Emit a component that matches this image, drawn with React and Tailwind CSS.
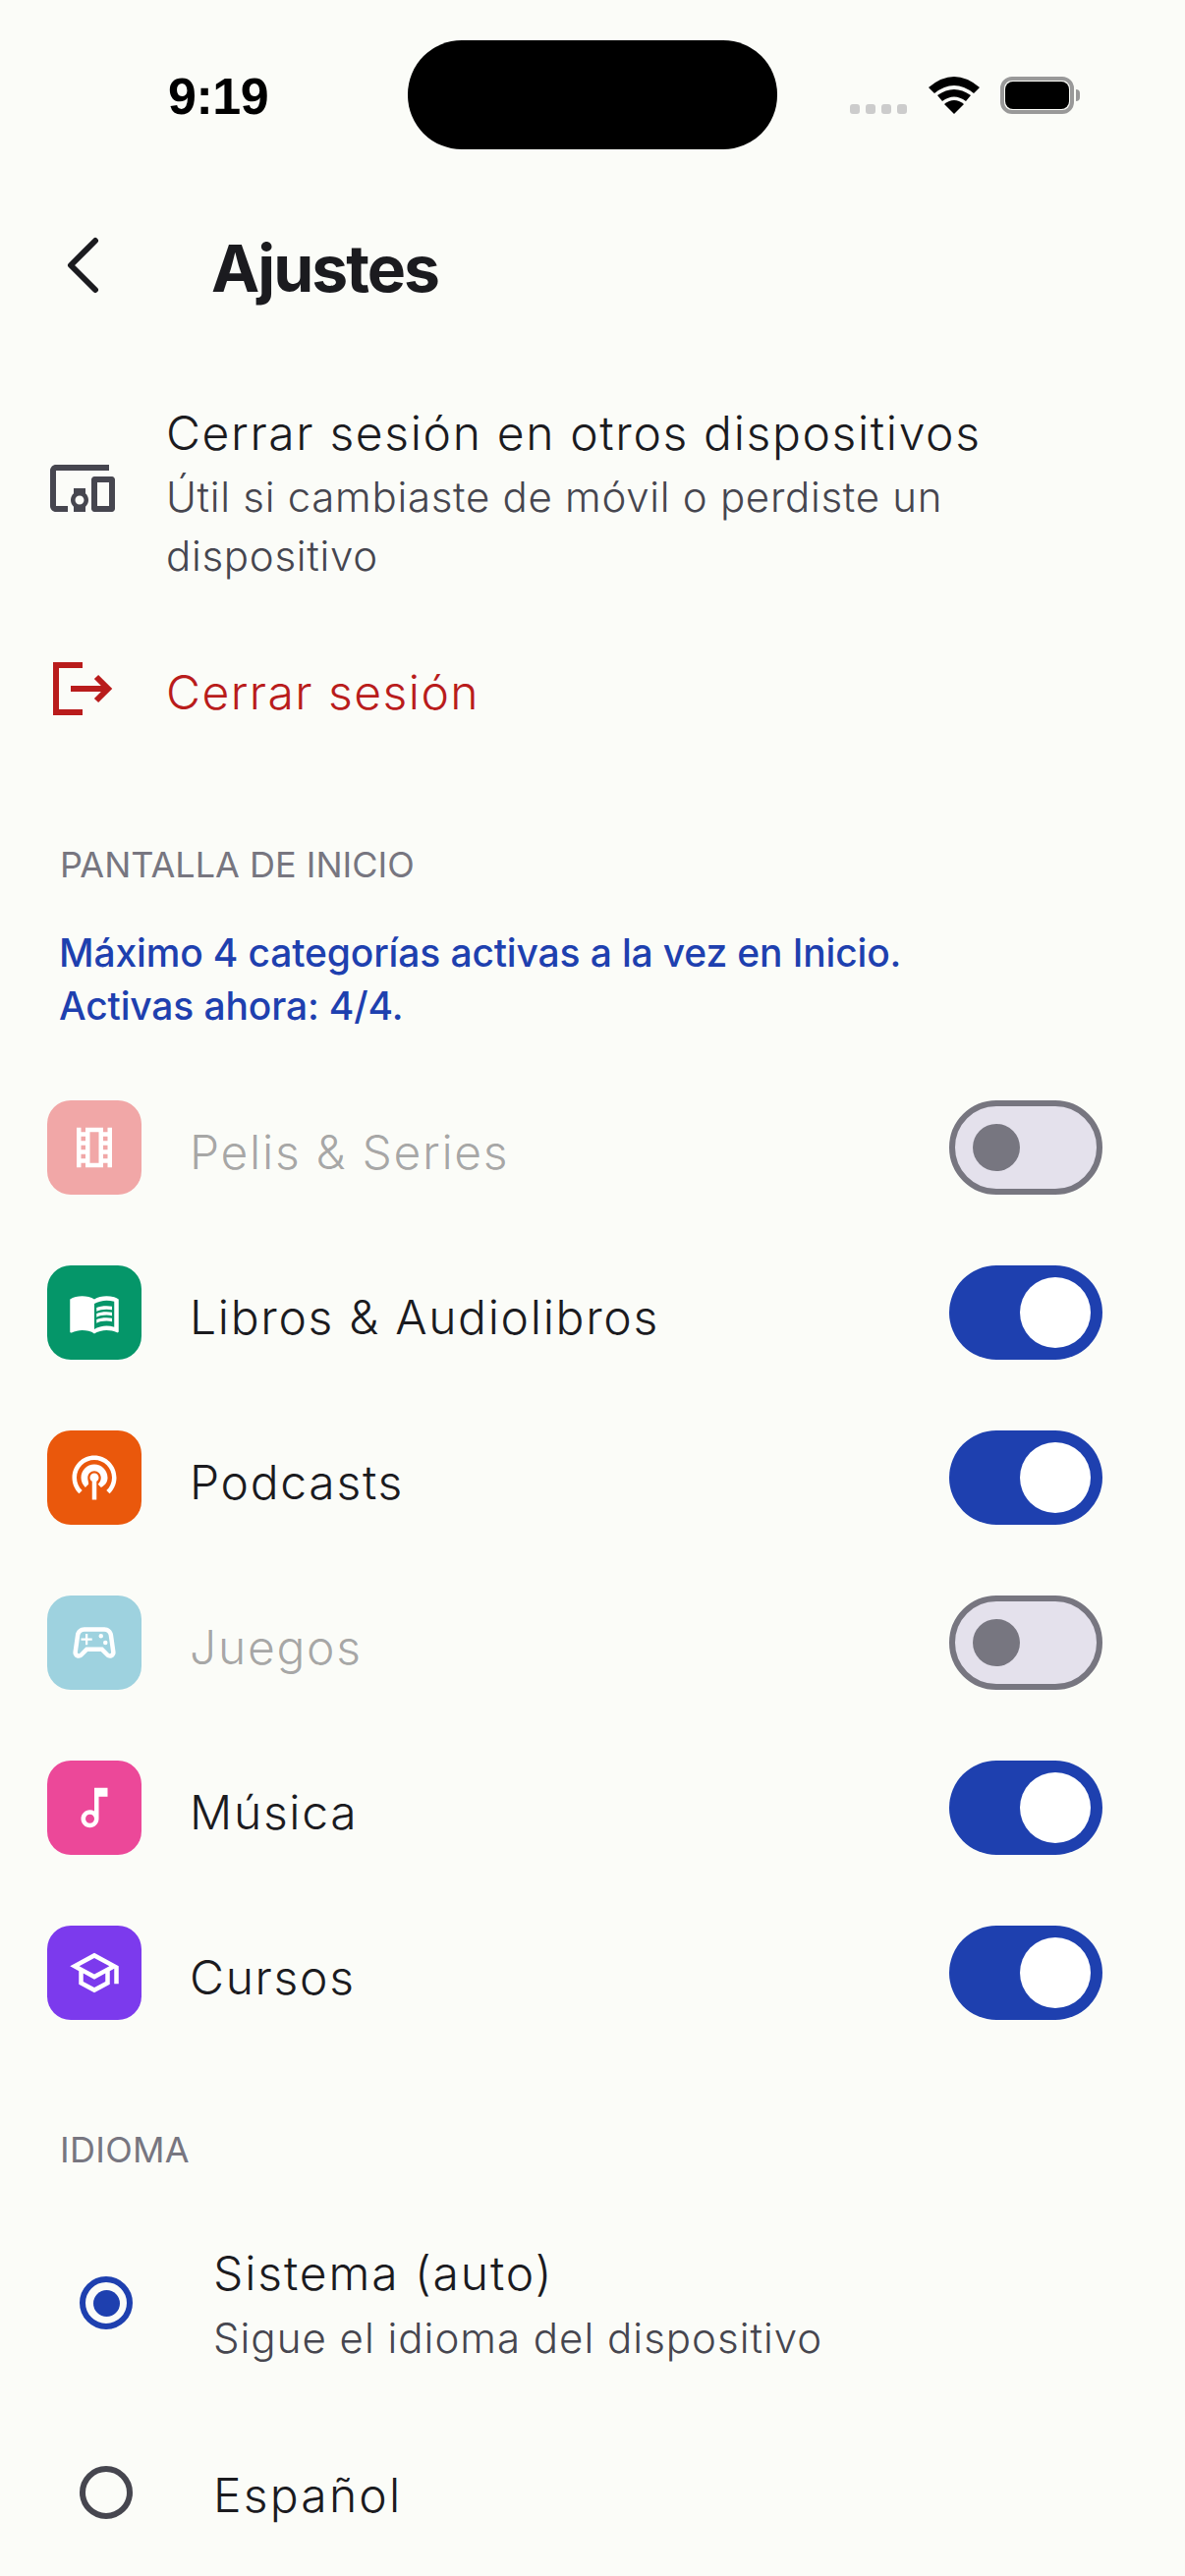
const P = ({ d, className = "" }) => (
  <svg viewBox="0 0 24 24" className={className} fill="currentColor"><path d={d} /></svg>
);

const film = "M18 3v2h-2V3H8v2H6V3H4v18h2v-2h2v2h8v-2h2v2h2V3h-2zM8 17H6v-2h2v2zm0-4H6v-2h2v2zm0-4H6V7h2v2zm6 10h-4V5h4v14zm4-2h-2v-2h2v2zm0-4h-2v-2h2v2zm0-4h-2V7h2v2z";
const book = "M21 5c-1.11-.35-2.33-.5-3.5-.5-1.95 0-4.05.4-5.5 1.5-1.45-1.1-3.55-1.5-5.5-1.5S2.45 4.9 1 6v14.65c0 .25.25.5.5.5.1 0 .15-.05.25-.05C3.1 20.45 5.05 20 6.5 20c1.95 0 4.05.4 5.5 1.5 1.35-.85 3.8-1.5 5.5-1.5 1.65 0 3.35.3 4.75 1.05.1.05.15.05.25.05.25 0 .5-.25.5-.5V6c-.6-.45-1.25-.75-2-1zm0 13.5c-1.1-.35-2.3-.5-3.5-.5-1.7 0-4.15.65-5.5 1.5V8c1.35-.85 3.8-1.5 5.5-1.5 1.2 0 2.4.15 3.5.5v11.5zM17.5 10.5c.88 0 1.73.09 2.5.26V9.24c-.79-.15-1.64-.24-2.5-.24-1.7 0-3.24.29-4.5.83v1.66c1.13-.64 2.7-.99 4.5-.99zM13 12.49v1.66c1.13-.64 2.7-.99 4.5-.99.88 0 1.73.09 2.5.26V11.9c-.79-.15-1.64-.24-2.5-.24-1.7 0-3.24.3-4.5.83zM17.5 14.33c-1.7 0-3.24.29-4.5.83v1.66c1.13-.64 2.7-.99 4.5-.99.88 0 1.73.09 2.5.26v-1.52c-.79-.16-1.64-.24-2.5-.24z";
const podcast = "M14 12c0 .74-.4 1.38-1 1.72V22h-2v-8.28c-.6-.35-1-.98-1-1.72 0-1.1.9-2 2-2s2 .9 2 2zm-2-6c-3.31 0-6 2.69-6 6 0 1.74.75 3.31 1.94 4.4l1.42-1.42C9.53 14.25 9 13.19 9 12c0-1.65 1.35-3 3-3s3 1.35 3 3c0 1.19-.53 2.25-1.36 2.98l1.42 1.42C17.25 15.31 18 13.74 18 12c0-3.31-2.69-6-6-6zm0-4C6.48 2 2 6.48 2 12c0 2.85 1.2 5.41 3.11 7.24l1.42-1.42C4.98 16.36 4 14.29 4 12c0-4.41 3.59-8 8-8s8 3.59 8 8c0 2.29-.98 4.36-2.53 5.82l1.42 1.42C20.8 17.41 22 14.85 22 12c0-5.52-4.48-10-10-10z";
const game = "M21.58 16.09l-1.09-7.66C20.21 6.46 18.52 5 16.53 5H7.47C5.48 5 3.79 6.46 3.51 8.43l-1.09 7.66C2.2 17.63 3.39 19 4.94 19c.68 0 1.32-.27 1.8-.75L9 16h6l2.25 2.25c.48.48 1.13.75 1.8.75C20.61 19 21.8 17.63 21.58 16.09zM19.48 16.81C19.4 16.9 19.27 17 19.06 17c-.15 0-.29-.06-.39-.16L15.83 14H8.17l-2.84 2.84C5.23 16.94 5.09 17 4.94 17c-.21 0-.34-.1-.42-.19-.08-.09-.16-.23-.13-.44l1.09-7.66C5.63 7.74 6.48 7 7.47 7h9.06c.99 0 1.84.74 1.98 1.72l1.09 7.66C19.64 16.58 19.56 16.72 19.48 16.81zM9 8H8v2H6v1h2v2h1v-2h2v-1H9zM18 12a1 1 0 1 1-2 0 1 1 0 0 1 2 0zM16 9a1 1 0 1 1-2 0 1 1 0 0 1 2 0z";
const music = "M12 3l.01 10.55c-.59-.34-1.27-.55-2.01-.55C7.79 13 6 14.79 6 17s1.79 4 4 4 4-1.79 4-4V7h4V3h-6zm-1.99 16c-1.1 0-2-.9-2-2s.9-2 2-2 2 .9 2 2-.9 2-2 2z";
const school = "M12 3L1 9l4 2.18v6L12 21l7-3.82v-6l2-1.09V17h2V9L12 3zm6.82 6L12 12.72 5.18 9 12 5.28 18.82 9zM17 15.99l-5 2.73-5-2.73v-3.72L12 15l5-2.73v3.72z";
const devices = "M3 6h18V4H3c-1.1 0-2 .9-2 2v12c0 1.1.9 2 2 2h4v-2H3V6zm10 6H9v1.78c-.61.55-1 1.33-1 2.22 0 .89.39 1.67 1 2.22V20h4v-1.78c.61-.55 1-1.34 1-2.22s-.39-1.67-1-2.22V12zm-2 5.5c-.83 0-1.5-.67-1.5-1.5s.67-1.5 1.5-1.5 1.5.67 1.5 1.5-.67 1.5-1.5 1.5zM22 8h-6c-.5 0-1 .5-1 1v10c0 .5.5 1 1 1h6c.5 0 1-.5 1-1V9c0-.5-.5-1-1-1zm-1 10h-4v-8h4v8z";

const font = "[font-family:'Inter','Noto_Sans',sans-serif]";

function Toggle({ on }) {
  return on ? (
    <div className="w-[156px] h-[96px] rounded-full bg-[#1e40af] flex items-center justify-end pr-[12px]">
      <div className="w-[72px] h-[72px] rounded-full bg-white" />
    </div>
  ) : (
    <div className="w-[156px] h-[96px] rounded-full bg-[#e4e1ec] border-[6px] border-[#777680] flex items-center pl-[18px]">
      <div className="w-[48px] h-[48px] rounded-full bg-[#777680]" />
    </div>
  );
}

function Cat({ icon, bg, label, on, last }) {
  return (
    <div className={`flex items-center h-[96px] pl-[48px] pr-[84px] ${last ? "" : "mb-[72px]"}`}>
      <div className={`w-[96px] h-[96px] rounded-[24px] flex items-center justify-center text-white ${bg}`}>
        <P d={icon} className="w-[54px] h-[54px]" />
      </div>
      <div className={`ml-[49px] flex-1 pt-[10px] text-[48px] leading-[72px] tracking-[1.7px] font-[350] ${on ? "text-[#1b1b1f]" : "text-[#1b1b1f]/40"}`}>{label}</div>
      <Toggle on={on} />
    </div>
  );
}

export default function App() {
  return (
    <div className={`w-[1206px] h-[2622px] overflow-hidden bg-[#fbfcf8] flex flex-col ${font}`}>
      {/* status bar */}
      <div className="flex items-start pt-[41px] h-[152px] shrink-0">
        <div className="w-[415px] pl-[171px] pt-[24px] text-[52px] leading-[66px] font-semibold text-black tracking-[-0.5px] [font-family:'Liberation_Sans',sans-serif]">9:19</div>
        <div className="w-[376px] h-[111px] rounded-[55px] bg-black" />
        <div className="ml-[74px] pt-[37px] flex items-start">
          <div className="flex gap-[6px] pt-[28px]">
            {[0, 1, 2, 3].map((i) => <div key={i} className="w-[10px] h-[10px] rounded-[3px] bg-[#cccccc]" />)}
          </div>
          <svg viewBox="0 0 52 38" className="ml-[22px] w-[52px] h-[38px]">
            <path d="M26 38 L16 28 Q26 20 36 28 Z" fill="#000" />
            <path d="M9 19 Q26 7 43 19 L38 25 Q26 16 14 25 Z" fill="#000" />
            <path d="M0 11 Q26 -11 52 11 L46 17 Q26 1 6 17 Z" fill="#000" />
          </svg>
          <div className="ml-[21px] w-[75px] h-[38px] rounded-[12px] border-[4px] border-[#999999] p-[1px]">
            <div className="w-full h-full rounded-[8px] bg-black" />
          </div>
          <div className="mt-[13px] ml-[2px] w-[4px] h-[12px] rounded-r-full bg-[#999999]" />
        </div>
      </div>

      {/* header */}
      <div className="flex items-center h-[112px] mt-[62px] shrink-0">
        <svg viewBox="0 0 36 60" className="ml-[66px] w-[36px] h-[60px]" fill="none" stroke="#1b1b1f" strokeWidth="6" strokeLinecap="round" strokeLinejoin="round">
          <path d="M31 5 L6 30 L31 55" />
        </svg>
        <div className="ml-[113px] pt-[6px] text-[66px] leading-[88px] font-bold tracking-[-2px] text-[#1b1b1f]">Ajustes</div>
      </div>

      {/* account rows */}
      <div className="flex items-center mt-[79px] pl-[48px] shrink-0">
        <div className="-mt-[8px] text-[#46464f]"><P d={devices} className="w-[72px] h-[72px]" /></div>
        <div className="ml-[49px]">
          <div className="text-[48px] leading-[71px] tracking-[1.65px] font-[350] text-[#1b1b1f]">Cerrar sesión en otros dispositivos</div>
          <div className="text-[42px] leading-[60px] tracking-[0.7px] font-[350] text-[#46464f] w-[860px]">Útil si cambiaste de móvil o perdiste un dispositivo</div>
        </div>
      </div>
      <div className="flex items-center mt-[73px] pl-[48px] shrink-0">
        <div className="-mt-[8px]">
          <svg viewBox="0 0 72 72" className="w-[72px] h-[72px]" fill="none" stroke="#b91c1c" strokeWidth="6">
            <path d="M36 12 H9 V60 H36" />
            <path d="M24 36 H61" />
            <path d="M50 24 L62 36 L50 48" />
          </svg>
        </div>
        <div className="ml-[49px] text-[48px] leading-[72px] tracking-[1.45px] font-[350] text-[#b91c1c]">Cerrar sesión</div>
      </div>

      {/* home */}
      <div className="mt-[115px] pl-[61px] text-[36px] leading-[48px] font-normal text-[#777680] shrink-0">PANTALLA DE INICIO</div>
      <div className="mt-[39px] pl-[60px] text-[39px] leading-[54px] font-medium tracking-[-0.15px] text-[#1e40af] shrink-0">
        Máximo 4 categorías activas a la vez en Inicio.<br />Activas ahora: 4/4.
      </div>
      <div className="mt-[69px] shrink-0">
        <Cat icon={film} bg="bg-[#f1a7a7]" label="Pelis & Series" on={false} />
        <Cat icon={book} bg="bg-[#059669]" label="Libros & Audiolibros" on />
        <Cat icon={podcast} bg="bg-[#ea580c]" label="Podcasts" on />
        <Cat icon={game} bg="bg-[#9ed2df]" label="Juegos" on={false} />
        <Cat icon={music} bg="bg-[#ec4899]" label="Música" on />
        <Cat icon={school} bg="bg-[#7c3aed]" label="Cursos" on last />
      </div>

      {/* language */}
      <div className="mt-[108px] pl-[61px] text-[36px] leading-[48px] font-normal tracking-[0.3px] text-[#777680] shrink-0">IDIOMA</div>
      <div className="mt-[66px] flex items-center pl-[81px] shrink-0">
        <div className="w-[54px] h-[54px] rounded-full border-[6px] border-[#1e40af] flex items-center justify-center">
          <div className="w-[27px] h-[27px] rounded-full bg-[#1e40af]" />
        </div>
        <div className="ml-[82px]">
          <div className="text-[48px] leading-[72px] tracking-[1.9px] font-[350] text-[#1b1b1f]">Sistema (auto)</div>
          <div className="text-[42px] leading-[60px] tracking-[1px] font-[350] text-[#46464f]">Sigue el idioma del dispositivo</div>
        </div>
      </div>
      <div className="mt-[88px] flex items-center pl-[81px] shrink-0">
        <div className="w-[54px] h-[54px] rounded-full border-[6px] border-[#46464f]" />
        <div className="ml-[82px] pt-[6px] text-[48px] leading-[72px] tracking-[2.2px] font-[350] text-[#1b1b1f]">Español</div>
      </div>
    </div>
  );
}
